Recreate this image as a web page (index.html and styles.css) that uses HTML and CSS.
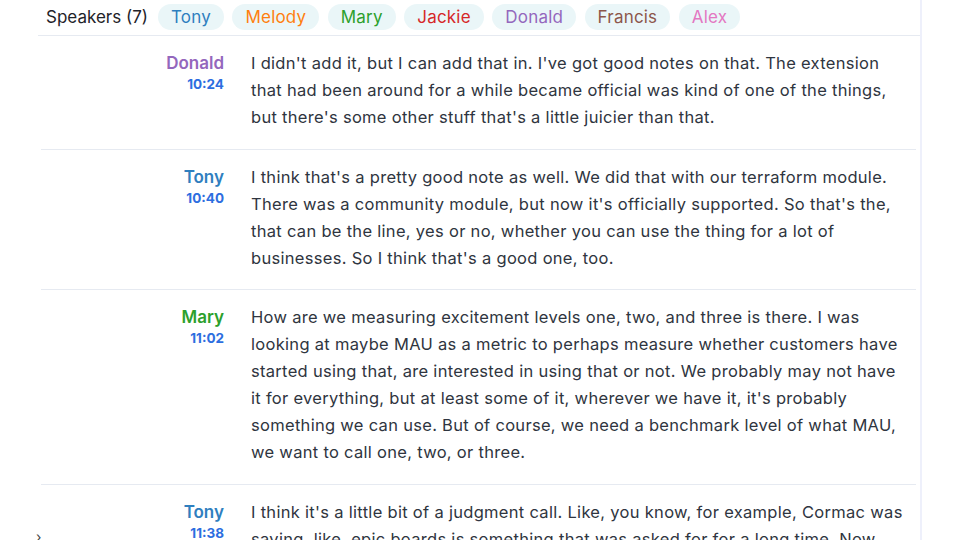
FILE: index.html
```html
<!DOCTYPE html>
<html lang="en">
<head>
<meta charset="utf-8">
<title>Transcript</title>
<link rel="stylesheet" href="styles.css">
</head>
<body>
<div class="panel">
  <div class="speakers">
    <span class="speakers-label">Speakers (7)</span>
    <span class="pill c-tony">Tony</span>
    <span class="pill c-melody">Melody</span>
    <span class="pill c-mary">Mary</span>
    <span class="pill c-jackie">Jackie</span>
    <span class="pill c-donald">Donald</span>
    <span class="pill c-francis">Francis</span>
    <span class="pill c-alex">Alex</span>
  </div>
  <div class="entry">
    <div class="who"><div class="name c-donald">Donald</div><div class="time">10:24</div></div>
    <div class="text">I didn't add it, but I can add that in. I've got good notes on that. The extension that had been around for a while became official was kind of one of the things, but there's some other stuff that's a little juicier than that.</div>
  </div>
  <div class="entry">
    <div class="who"><div class="name c-tony">Tony</div><div class="time">10:40</div></div>
    <div class="text">I think that's a pretty good note as well. We did that with our terraform module. There was a community module, but now it's officially supported. So that's the, that can be the line, yes or no, whether you can use the thing for a lot of businesses. So I think that's a good one, too.</div>
  </div>
  <div class="entry">
    <div class="who"><div class="name c-mary">Mary</div><div class="time">11:02</div></div>
    <div class="text">How are we measuring excitement levels one, two, and three is there. I was looking at maybe MAU as a metric to perhaps measure whether customers have started using that, are interested in using that or not. We probably may not have it for everything, but at least some of it, wherever we have it, it's probably something we can use. But of course, we need a benchmark level of what MAU, we want to call one, two, or three.</div>
  </div>
  <div class="entry">
    <div class="who"><div class="name c-tony">Tony</div><div class="time">11:38</div></div>
    <div class="text">I think it's a little bit of a judgment call. Like, you know, for example, Cormac was saying, like, epic boards is something that was asked for for a long time. Now that it's there, people will be excited about it, and we can measure that.</div>
  </div>
</div>
<span class="edge-mark">›</span>
</body>
</html>
```
FILE: styles.css
```css
html, body {
  margin: 0;
  padding: 0;
  background: #ffffff;
  height: 540px;
  overflow: hidden;
}
body {
  font-family: Inter, "Noto Sans", sans-serif;
  color: #2f3540;
  position: relative;
}
.panel {
  margin-left: 38px;
  width: 882px;
  height: 540px;
  border-right: 2px solid #eef0fb;
}
.speakers {
  display: flex;
  align-items: center;
  gap: 8.5px;
  padding: 4px 0 5px 8px;
  border-bottom: 1px solid #e6eaf1;
  font-size: 17px;
}
.speakers-label {
  color: #1f2329;
  margin-right: 1.5px;
}
.pill {
  background: #eaf6f8;
  border-radius: 13px;
  height: 26px;
  line-height: 26px;
  padding: 0 13px;
  letter-spacing: 0.2px;
}
.c-tony { color: #2f7fbf; }
.c-melody { color: #ff7f0e; }
.c-mary { color: #2ca02c; }
.c-jackie { color: #d62728; }
.c-donald { color: #9467bd; }
.c-francis { color: #8c564b; }
.c-alex { color: #e377c2; }
.entry {
  display: grid;
  grid-template-columns: 183px 1fr;
  column-gap: 27px;
  margin: 0 4px 0 3px;
  padding: 14px 8px 17.5px 0;
  border-bottom: 1px solid #e6eaf1;
}
.who {
  text-align: right;
}
.name {
  font-size: 17px;
  font-weight: 600;
  line-height: 27px;
}
.time {
  font-size: 13.5px;
  font-weight: 700;
  line-height: 15px;
  color: #2d6ee0;
}
.text {
  font-size: 16.5px;
  letter-spacing: 0.3px;
  line-height: 27px;
}
.edge-mark {
  position: absolute;
  left: 36px;
  top: 528px;
  font-size: 14px;
  color: #444;
}
```
